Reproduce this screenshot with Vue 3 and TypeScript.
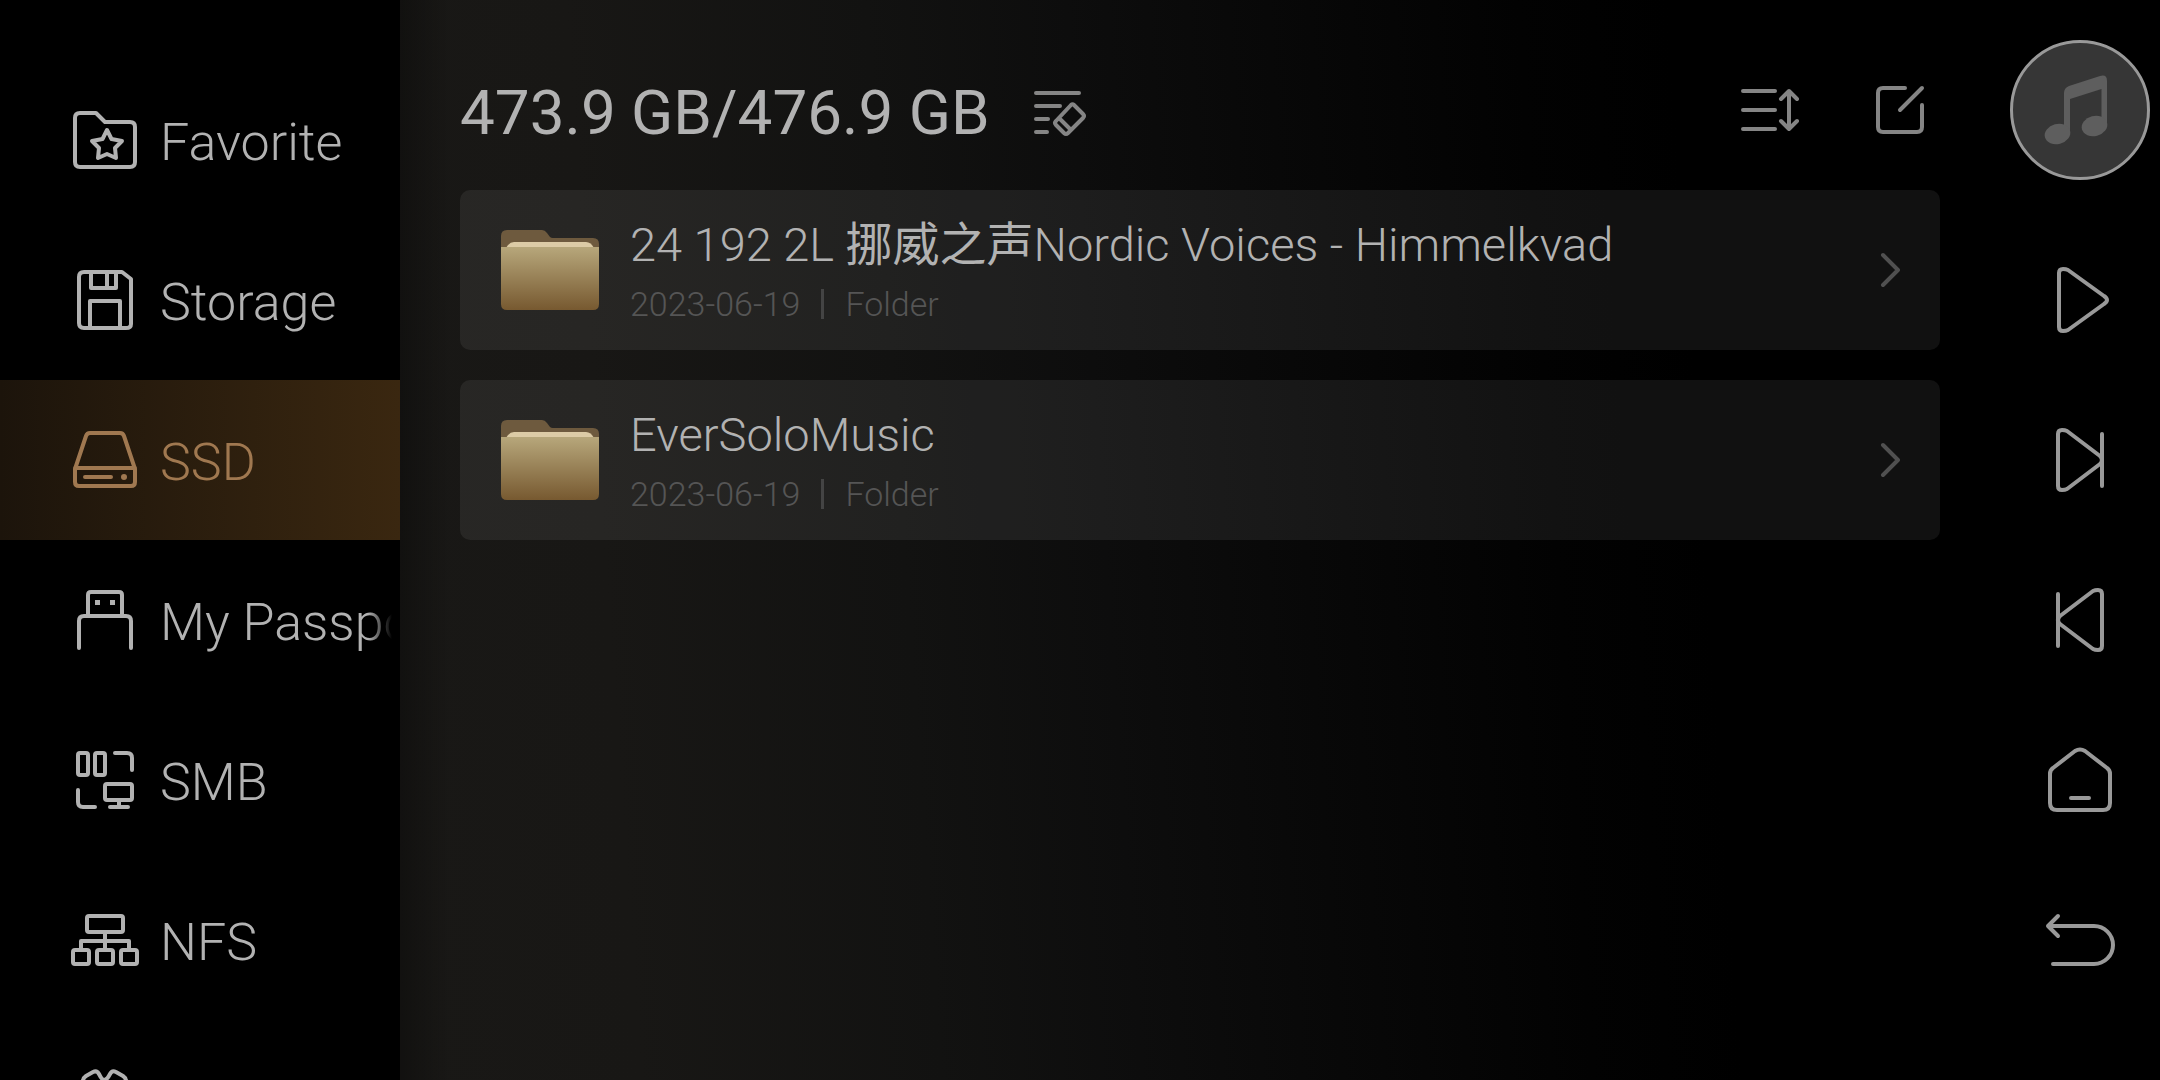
<script setup lang="ts">
import { ref } from 'vue'

interface Source {
  id: string
  label: string
}

interface Entry {
  name: string
  date: string
  kind: string
}

interface Segment {
  text: string
  han: boolean
}

const sources: Source[] = [
  { id: 'favorite', label: 'Favorite' },
  { id: 'storage', label: 'Storage' },
  { id: 'ssd', label: 'SSD' },
  { id: 'usb', label: 'My Passport' },
  { id: 'smb', label: 'SMB' },
  { id: 'nfs', label: 'NFS' },
  { id: 'other', label: '' },
]

const entries: Entry[] = [
  { name: '24 192 2L 挪威之声Nordic Voices - Himmelkvad', date: '2023-06-19', kind: 'Folder' },
  { name: 'EverSoloMusic', date: '2023-06-19', kind: 'Folder' },
]

const active = ref('ssd')

// Han characters are set in the regular weight, Latin ones in the light weight.
function segments(name: string): Segment[] {
  return name
    .split(/([\u4e00-\u9fff]+)/)
    .filter((text) => text !== '')
    .map((text) => ({ text, han: /[\u4e00-\u9fff]/.test(text) }))
}
</script>

<template>
  <div class="app">
    <nav class="sidebar" aria-label="Sources">
      <button
        v-for="s in sources"
        :key="s.id"
        type="button"
        class="source"
        :class="{ active: s.id === active }"
        :aria-label="s.label || 'More'"
        @click="active = s.id"
      >
        <svg class="source-icon" viewBox="0 0 70 70" aria-hidden="true">
          <g v-if="s.id === 'favorite'">
            <path d="M10 8H26L35 17H60Q65 17 65 22V57Q65 62 60 62H10Q5 62 5 57V13Q5 8 10 8Z" />
            <path d="M37 25L41.500 34L52 36L45 43L46 53L37 49L28 53L29 43L22 36L32.500 34Z" />
          </g>
          <g v-else-if="s.id === 'storage'">
            <path d="M14 7H52L61 14V59Q61 63 56 63H14Q9 63 9 58V12Q9 7 14 7Z" />
            <path d="M21 7V23H46V7M37 7V23M20 63V36H50V63" />
          </g>
          <g v-else-if="s.id === 'ssd'">
            <path d="M20 8H50Q53 8 54 11L65 44V57Q65 61 61 61H9Q5 61 5 57V44L16 11Q17 8 20 8ZM5 43H65M15 52H41" />
            <circle class="solid" cx="54" cy="52" r="3" />
          </g>
          <g v-else-if="s.id === 'usb'">
            <path d="M18 31V10Q18 7 21 7H49Q52 7 52 10V31M9 63V36Q9 31 14 31H56Q61 31 61 36V63" />
            <path class="solid" d="M25 15H30V20H25ZM40 15H45V20H40Z" />
          </g>
          <g v-else-if="s.id === 'smb'">
            <rect x="8" y="8" width="10" height="22" rx="2" />
            <rect x="25" y="8" width="10" height="22" rx="2" />
            <path d="M45 8H57Q62 8 62 13V25M8 45V57Q8 62 13 62H25M49 56V62M40 62H58" />
            <rect x="35" y="39" width="27" height="16" rx="2" />
          </g>
          <g v-else-if="s.id === 'nfs'">
            <rect x="17" y="11" width="36" height="16" rx="2" />
            <path d="M35 27V45M11 45V36H59V45" />
            <rect x="3" y="45" width="16" height="14" rx="2" />
            <rect x="27" y="45" width="16" height="14" rx="2" />
            <rect x="51" y="45" width="16" height="14" rx="2" />
          </g>
          <g v-else>
            <path d="M13 16Q13 13 16 11L23 7Q27 5 29 9Q32 15 34 15Q37 15 40 9Q42 5 46 7L53 11Q56 13 56 16" />
            <path d="M13 16V30H56V16M17 30V62H52V30" />
          </g>
        </svg>
        <span class="source-label">{{ s.label }}</span>
      </button>
    </nav>

    <main class="content">
      <header class="toolbar">
        <h1 class="capacity">473.9 GB/476.9 GB</h1>
        <button type="button" class="tool" aria-label="Clean up">
          <svg viewBox="0 0 60 60" aria-hidden="true">
            <path d="M6 13H49M6 26H30M6 39H18M6 52H17" />
            <path d="M44 25L53 34Q55 36 53 38L38 53Q36 55 34 53L26 45Q24 43 26 41L41 25Q42.500 23.500 44 25ZM30 39L40 49" />
          </svg>
        </button>
        <span class="spacer"></span>
        <button type="button" class="tool" aria-label="Sort">
          <svg viewBox="0 0 60 60" aria-hidden="true">
            <path d="M3 11H35M3 30H35M3 49H35M49 12V48M41 19L49 11L57 19M41 41L49 49L57 41" />
          </svg>
        </button>
        <button type="button" class="tool" aria-label="Edit">
          <svg viewBox="0 0 60 60" aria-hidden="true">
            <path d="M35 8H13Q8 8 8 13V47Q8 52 13 52H47Q52 52 52 47V25M30 30L52 8" />
          </svg>
        </button>
      </header>

      <ul class="entries">
        <li v-for="e in entries" :key="e.name">
          <button type="button" class="entry">
            <svg class="folder" viewBox="0 0 98 80" aria-hidden="true">
              <defs>
                <linearGradient id="folder-front" x1="0" y1="0" x2="0" y2="1">
                  <stop offset="0" stop-color="#b7a77b" />
                  <stop offset="1" stop-color="#775930" />
                </linearGradient>
              </defs>
              <path fill="#6e5a3e" d="M0 20V6Q0 0 6 0H41Q44 0 46 3L49 7Q50 8 52 8H92Q98 8 98 14V20Z" />
              <path fill="#dccba6" d="M5 18Q8 12 13 12H85Q90 12 93 18Z" />
              <path fill="url(#folder-front)" d="M0 17H98V74Q98 80 92 80H6Q0 80 0 74Z" />
            </svg>
            <span class="entry-text">
              <span class="entry-name"><span v-for="(p, i) in segments(e.name)" :key="i" :class="{ han: p.han }">{{ p.text }}</span></span>
              <span class="entry-meta">
                <span>{{ e.date }}</span>
                <span class="divider"></span>
                <span>{{ e.kind }}</span>
              </span>
            </span>
            <svg class="chevron" viewBox="0 0 20 36" aria-hidden="true">
              <path d="M3 3L18 18L3 33" />
            </svg>
          </button>
        </li>
      </ul>
    </main>

    <aside class="rail" aria-label="Player">
      <button type="button" class="cover" aria-label="Now playing">
        <svg viewBox="0 0 140 140" aria-hidden="true">
          <path d="M54 94V53Q54 48 59 46L90 36Q97 34 97 41V86H91.500V49L60 59V94Z" />
          <ellipse cx="47.500" cy="94" rx="13" ry="10" transform="rotate(-15 47.500 94)" />
          <ellipse cx="84.500" cy="86" rx="13" ry="10" transform="rotate(-15 84.500 86)" />
        </svg>
      </button>
      <button type="button" class="control" aria-label="Play">
        <svg viewBox="0 0 80 80" aria-hidden="true">
          <path d="M19 13Q19 9 23 9Q26 9 28 10L64 36Q70 40 64 44L28 70Q26 71 23 71Q19 71 19 67Z" />
        </svg>
      </button>
      <button type="button" class="control" aria-label="Next">
        <svg viewBox="0 0 80 80" aria-hidden="true">
          <path d="M18 14Q18 10 22 10Q25 10 27 11L60 36Q64 40 60 44L27 69Q25 70 22 70Q18 70 18 66ZM62 14V66" />
        </svg>
      </button>
      <button type="button" class="control" aria-label="Previous">
        <svg viewBox="0 0 80 80" aria-hidden="true">
          <path d="M62 14Q62 10 58 10Q55 10 53 11L20 36Q16 40 20 44L53 69Q55 70 58 70Q62 70 62 66ZM18 14V66" />
        </svg>
      </button>
      <button type="button" class="control" aria-label="Home">
        <svg viewBox="0 0 80 80" aria-hidden="true">
          <path d="M35 11Q40 8 45 11L67 28Q70 30 70 34V63Q70 70 63 70H17Q10 70 10 63V34Q10 30 13 28ZM31 58H49" />
        </svg>
      </button>
      <button type="button" class="control" aria-label="Back">
        <svg viewBox="0 0 80 80" aria-hidden="true">
          <path d="M8 26H54A19 19 0 0 1 54 64H13M18 16L8 26L18 36" />
        </svg>
      </button>
    </aside>
  </div>
</template>

<style>
body {
  background: #000;
}
</style>

<style scoped>
.app {
  display: flex;
  height: 100vh;
  overflow: hidden;
  background: #000;
  color: #b2b2b2;
  font-family: Roboto, "Noto Sans CJK SC", sans-serif;
  font-weight: 300;
}

button {
  margin: 0;
  padding: 0;
  border: 0;
  background: none;
  color: inherit;
  font: inherit;
  text-align: left;
  cursor: pointer;
}

svg {
  display: block;
  flex: none;
  fill: none;
  stroke: currentColor;
  stroke-width: 4;
  stroke-linecap: round;
  stroke-linejoin: round;
}

.sidebar {
  display: flex;
  flex: none;
  flex-direction: column;
  width: 400px;
  padding-top: 60px;
  box-sizing: border-box;
}

.source {
  display: flex;
  flex: none;
  align-items: center;
  gap: 20px;
  height: 160px;
  padding: 0 8px 0 70px;
}

.source.active {
  background: linear-gradient(90deg, #1c140b, #3a2710);
  color: #a07850;
}

.source-icon {
  width: 70px;
  height: 70px;
}

.source-icon .solid {
  fill: currentColor;
  stroke: none;
}

.source-label {
  flex: 1;
  min-width: 0;
  padding-top: 6px;
  overflow: hidden;
  font-size: 52px;
  line-height: 64px;
  white-space: nowrap;
  mask-image: linear-gradient(90deg, #000 calc(100% - 24px), transparent);
}

.content {
  flex: 1;
  min-width: 0;
  padding: 70px 60px 0;
  background:
    linear-gradient(90deg, rgba(0, 0, 0, 0.3), transparent 50px),
    linear-gradient(86deg, #191816 0, #181715 240px, #121211 540px, #0d0d0d 740px, #080808 940px, #020202 1190px, #000 1340px);
}

.toolbar {
  display: flex;
  align-items: center;
  height: 80px;
  margin-bottom: 40px;
}

.capacity {
  margin: 0 40px 0 0;
  padding-top: 6px;
  font-size: 62px;
  font-weight: 400;
  line-height: 76px;
  white-space: nowrap;
}

.tool {
  width: 60px;
  height: 60px;
  color: #858585;
}

.tool + .tool {
  margin: 0 10px 0 70px;
}

.spacer {
  flex: 1;
}

.entries {
  display: flex;
  flex-direction: column;
  gap: 30px;
  margin: 0;
  padding: 0;
  list-style: none;
}

.entry {
  display: flex;
  align-items: center;
  width: 100%;
  height: 160px;
  padding: 0 40px;
  border-radius: 10px;
  background: rgba(255, 255, 255, 0.066);
}

.folder {
  width: 100px;
  height: 80px;
  margin-right: 30px;
  stroke: none;
}

.entry-text {
  display: flex;
  flex: 1;
  flex-direction: column;
  min-width: 0;
}

.entry-name {
  overflow: hidden;
  font-size: 47px;
  line-height: 68px;
  text-overflow: ellipsis;
  white-space: nowrap;
}

.han {
  font-weight: 400;
}

.entry-meta {
  display: flex;
  align-items: center;
  gap: 21px;
  color: #555;
  font-size: 34px;
  line-height: 50px;
}

.divider {
  width: 3px;
  height: 30px;
  background: #444;
}

.chevron {
  width: 20px;
  height: 36px;
  color: #505050;
}

.rail {
  display: flex;
  flex: none;
  flex-direction: column;
  align-items: center;
  width: 160px;
  padding-top: 40px;
  box-sizing: border-box;
  color: #999;
}

.cover {
  width: 140px;
  height: 140px;
  margin-bottom: 40px;
  border: 3px solid #999;
  border-radius: 50%;
  box-sizing: border-box;
  background: #363636;
}

.cover svg {
  width: 140px;
  height: 140px;
  margin: -3px;
  fill: #5e5e5e;
  stroke: none;
}

.control {
  display: flex;
  flex: none;
  align-items: center;
  justify-content: center;
  width: 160px;
  height: 160px;
}

.control svg {
  width: 80px;
  height: 80px;
}
</style>
